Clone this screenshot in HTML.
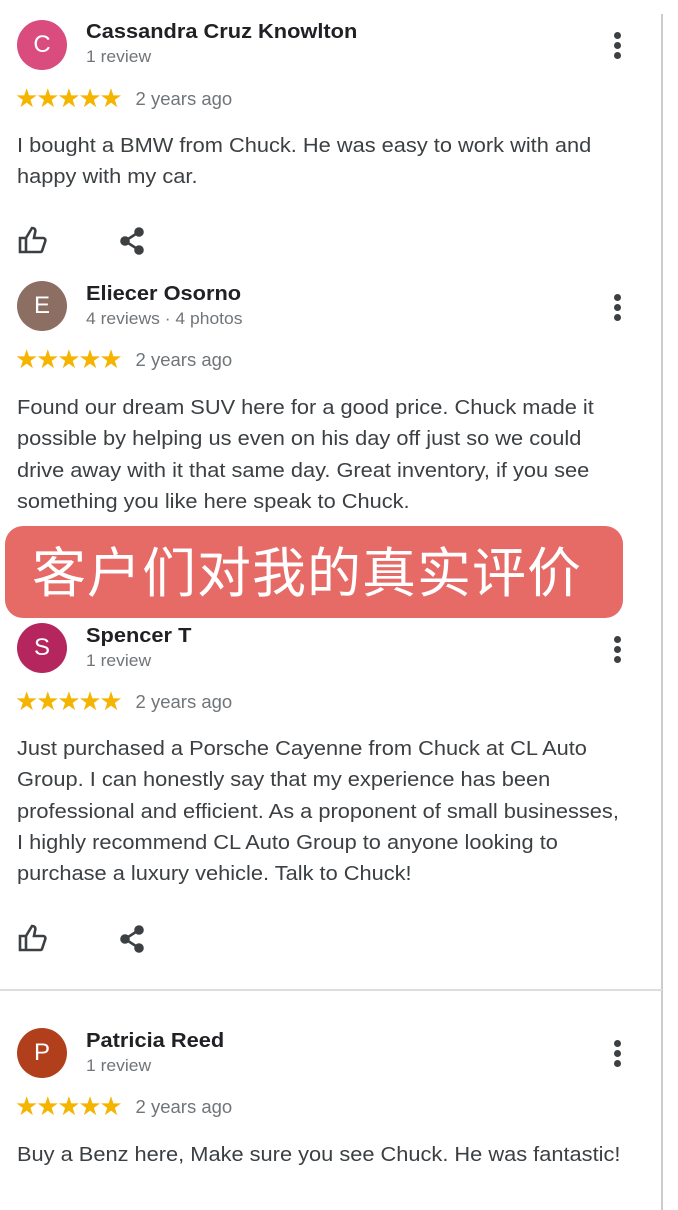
<!DOCTYPE html>
<html style="height:1210px;overflow:hidden"><head><meta charset="utf-8"><style>
body{margin:0;width:678px;height:1210px;background:#fff;position:relative;overflow:hidden;font-family:"Liberation Sans",Arial,sans-serif;color:#222}
.a{position:absolute}
.av{position:absolute;left:17px;width:50px;height:50px;border-radius:50%;color:#fff;font-size:24px;text-align:center;line-height:50px}
.nm{position:absolute;left:86px;font-size:20px;font-weight:bold;color:#202124;transform:scaleX(1.09);transform-origin:left;white-space:nowrap}
.sb{position:absolute;left:86px;font-size:16.5px;color:#70757a;transform:scaleX(1.06);transform-origin:left;white-space:nowrap}
.st{position:absolute;left:15px;font-size:26px;color:#f4b400;letter-spacing:-2.2px;white-space:nowrap}
.st span{color:#70757a;font-size:18.5px;letter-spacing:0;margin-left:15px;position:relative;top:-2px}
.tx{position:absolute;left:17px;font-size:20px;line-height:31.3px;color:#3c4043;transform:scaleX(1.09);transform-origin:left;white-space:nowrap}
.dots{position:absolute;left:614px;width:7px}
.dots i{display:block;width:7px;height:7px;border-radius:50%;background:#3c4043;margin-bottom:3px}
</style></head><body>
<div class="a" style="left:661px;top:14px;width:2px;height:1196px;background:#ccc"></div>
<div class="a" style="left:0;top:989px;width:662px;height:2px;background:#ddd"></div>

<div class="av" style="top:20px;background:#d94c7d">C</div>
<div class="nm" style="top:21px">Cassandra Cruz Knowlton</div>
<div class="sb" style="top:48px">1 review</div>
<div class="dots" style="top:32px"><i></i><i></i><i></i></div>
<div class="st" style="top:83px">★★★★★<span>2 years ago</span></div>
<div class="tx" style="top:131px">I bought a BMW from Chuck. He was easy to work with and<br>happy with my car.</div>

<svg class="a" style="left:18px;top:226px" width="30" height="28" viewBox="0 0 30 28" fill="none" stroke="#3c4043" stroke-width="2.6"><path d="M2 12h6v14H2zM8 12l6-10c3 0 4 2 3 5l-1 5h9c2 0 3 2 2 4l-3 9c-.5 1-1 1-2 1H8"/></svg>
<svg class="a" style="left:119px;top:227px" width="28" height="28" viewBox="0 0 28 28" fill="#3c4043" stroke="#3c4043" stroke-width="2.6"><circle cx="20" cy="5" r="3.5"/><circle cx="6" cy="14" r="3.5"/><circle cx="20" cy="23" r="3.5"/><path d="M20 5L6 14l14 9" fill="none"/></svg>

<div class="av" style="top:281px;background:#8d6e63">E</div>
<div class="nm" style="top:283px">Eliecer Osorno</div>
<div class="sb" style="top:310px">4 reviews · 4 photos</div>
<div class="dots" style="top:294px"><i></i><i></i><i></i></div>
<div class="st" style="top:344px">★★★★★<span>2 years ago</span></div>
<div class="tx" style="top:393px">Found our dream SUV here for a good price. Chuck made it<br>possible by helping us even on his day off just so we could<br>drive away with it that same day. Great inventory, if you see<br>something you like here speak to Chuck.</div>

<div class="a" style="left:5px;top:526px;width:618px;height:92px;background:#e66a66;border-radius:18px"></div>
<div class="a" style="left:32px;top:540px;font-size:54px;line-height:68px;color:#fff;font-family:'Liberation Sans','Noto Sans CJK SC',sans-serif;letter-spacing:1px;white-space:nowrap">客户们对我的真实评价</div>

<div class="av" style="top:623px;background:#b5255e">S</div>
<div class="nm" style="top:625px">Spencer T</div>
<div class="sb" style="top:652px">1 review</div>
<div class="dots" style="top:636px"><i></i><i></i><i></i></div>
<div class="st" style="top:686px">★★★★★<span>2 years ago</span></div>
<div class="tx" style="top:734px">Just purchased a Porsche Cayenne from Chuck at CL Auto<br>Group. I can honestly say that my experience has been<br>professional and efficient. As a proponent of small businesses,<br>I highly recommend CL Auto Group to anyone looking to<br>purchase a luxury vehicle. Talk to Chuck!</div>

<svg class="a" style="left:18px;top:924px" width="30" height="28" viewBox="0 0 30 28" fill="none" stroke="#3c4043" stroke-width="2.6"><path d="M2 12h6v14H2zM8 12l6-10c3 0 4 2 3 5l-1 5h9c2 0 3 2 2 4l-3 9c-.5 1-1 1-2 1H8"/></svg>
<svg class="a" style="left:119px;top:925px" width="28" height="28" viewBox="0 0 28 28" fill="#3c4043" stroke="#3c4043" stroke-width="2.6"><circle cx="20" cy="5" r="3.5"/><circle cx="6" cy="14" r="3.5"/><circle cx="20" cy="23" r="3.5"/><path d="M20 5L6 14l14 9" fill="none"/></svg>

<div class="av" style="top:1028px;background:#b23f1c">P</div>
<div class="nm" style="top:1030px">Patricia Reed</div>
<div class="sb" style="top:1057px">1 review</div>
<div class="dots" style="top:1040px"><i></i><i></i><i></i></div>
<div class="st" style="top:1091px">★★★★★<span>2 years ago</span></div>
<div class="tx" style="top:1140px">Buy a Benz here, Make sure you see Chuck. He was fantastic!</div>
</body></html>
